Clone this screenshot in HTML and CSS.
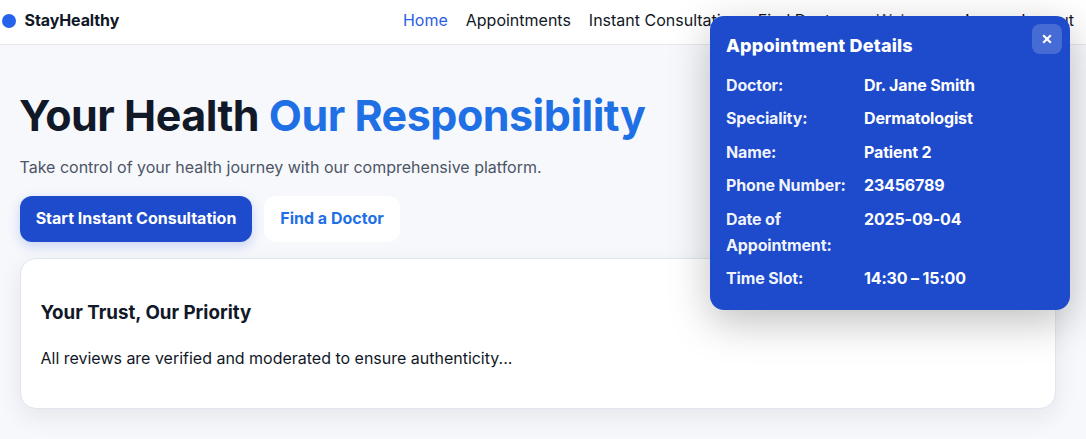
FILE: index.html
```html
<!DOCTYPE html>
<html lang="en">
<head>
<meta charset="utf-8">
<title>StayHealthy</title>
<link rel="stylesheet" href="styles.css">
</head>
<body>
<header class="navbar">
  <a class="brand"><span class="brand-dot"></span>StayHealthy</a>
  <nav class="nav-links">
    <a class="active">Home</a>
    <a>Appointments</a>
    <a>Instant Consultation</a>
    <a>Find Doctors</a>
    <span class="welcome">Welcome, <b>niveq</b></span>
    <a>Logout</a>
  </nav>
</header>
<main class="page">
  <h1 class="hero-title">Your Health <span class="accent">Our Responsibility</span></h1>
  <p class="hero-text">Take control of your health journey with our comprehensive platform.</p>
  <div class="actions">
    <a class="btn btn-primary">Start Instant Consultation</a>
    <a class="btn btn-light">Find a Doctor</a>
  </div>
  <section class="card">
    <h3 class="card-title">Your Trust, Our Priority</h3>
    <p class="card-text">All reviews are verified and moderated to ensure authenticity...</p>
  </section>
</main>
<aside class="popup">
  <button class="close" aria-label="Close"><svg width="10" height="10" viewBox="0 0 10 10"><path d="M1.2 1.2 8.8 8.8M8.8 1.2 1.2 8.8" fill="none" stroke="#fff" stroke-width="2.2"/></svg></button>
  <h2 class="popup-title">Appointment Details</h2>
  <dl class="details">
    <dt>Doctor:</dt><dd>Dr. Jane Smith</dd>
    <dt>Speciality:</dt><dd>Dermatologist</dd>
    <dt>Name:</dt><dd>Patient 2</dd>
    <dt>Phone Number:</dt><dd>23456789</dd>
    <dt>Date of Appointment:</dt><dd>2025-09-04</dd>
    <dt>Time Slot:</dt><dd>14:30 – 15:00</dd>
  </dl>
</aside>
</body>
</html>
```
FILE: styles.css
```css
* { box-sizing: border-box; }
html, body { height: 100%; }
body {
  margin: 0;
  overflow: hidden;
  font: 16px/1.6 Inter, sans-serif;
  color: #111827;
  background: #f7f8fc;
}
.navbar {
  display: flex;
  justify-content: space-between;
  align-items: center;
  height: 45px;
  padding: 0 12px 2px 2px;
  background: #fff;
  border-bottom: 1px solid #e5e7eb;
}
.brand { display: flex; align-items: center; gap: 8.5px; font-weight: 700; letter-spacing: -0.1px; }
.brand-dot { width: 14px; height: 14px; border-radius: 50%; background: #2563eb; }
.nav-links { display: flex; gap: 18px; white-space: nowrap; }
.nav-links .active { color: #2b5fe3; }
.welcome { width: 127px; margin-left: 4px; color: #475569; }
.welcome b { font-weight: 500; color: #111827; }
.page { padding: 40px 30px 0 20px; }
.hero-title {
  margin: 0 0 0 -1px;
  font-size: 43px;
  line-height: 60px;
  font-weight: 700;
  letter-spacing: -0.5px;
  white-space: nowrap;
}
.accent { color: #1f6fe5; }
.hero-text { margin: 10px 0 15px -0.5px; color: #4b5565; }
.actions { display: flex; gap: 12px; }
.btn {
  display: flex;
  align-items: center;
  justify-content: center;
  height: 46px;
  border-radius: 12px;
  font-weight: 700;
  white-space: nowrap;
}
.btn-primary { width: 232px; color: #fff; background: #1e4bcb; box-shadow: 0 4px 12px rgba(30, 75, 203, .22); }
.btn-light { width: 136px; color: #1f6fe5; background: #fff; }
.card {
  height: 151px;
  margin-top: 16px;
  padding: 39px 19.5px;
  background: #fff;
  border: 1px solid #e0e6ed;
  border-radius: 16px;
  box-shadow: 0 8px 24px rgba(15, 23, 42, .08);
}
.card-title { margin: 0; font-size: 18.72px; line-height: 30px; font-weight: 700; }
.card-text { margin: 18px 0 0; letter-spacing: -0.01px; }
.popup {
  position: absolute;
  top: 16px;
  right: 16px;
  width: 360px;
  height: 294px;
  padding: 16px;
  color: #fff;
  background: #1e4bcb;
  border-radius: 14px;
  box-shadow: 0 12px 40px rgba(0, 0, 0, .25);
}
.popup-title { margin: 0 0 12.6px; font-size: 18px; line-height: 28px; font-weight: 800; letter-spacing: 0.2px; }
.close {
  position: absolute;
  top: 8px;
  right: 8px;
  width: 30px;
  height: 30px;
  display: grid;
  place-items: center;
  padding: 0;
  border: 0;
  border-radius: 8px;
  background: rgba(255, 255, 255, .18);
}
.details {
  display: grid;
  grid-template-columns: 130px 1fr;
  gap: 8px;
  margin: 0;
  font-weight: 700;
  letter-spacing: -0.15px;
}
.details dt { color: rgba(255, 255, 255, .95); }
.details dd { margin: 0; }
```
